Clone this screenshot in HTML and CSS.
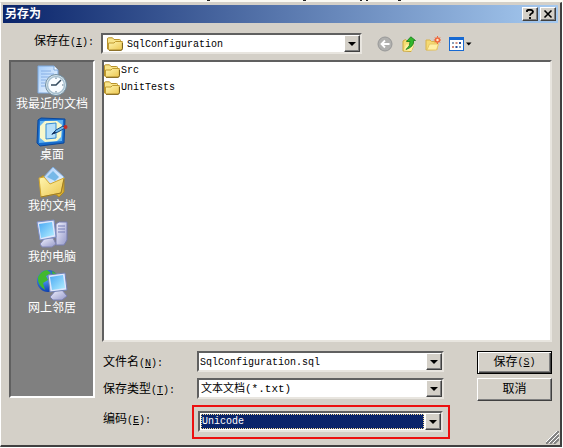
FILE: index.html
```html
<!DOCTYPE html>
<html lang="zh-CN">
<head>
<meta charset="utf-8">
<title>另存为</title>
<link rel="stylesheet" href="styles.css">
</head>
<body>
<svg class="defs" aria-hidden="true">
  <defs>
    <linearGradient id="fold" x1="0" y1="0" x2="1" y2="1"><stop offset="0" stop-color="#fff6b0"/><stop offset="1" stop-color="#ecc650"/></linearGradient>
    <linearGradient id="scr" x1="0" y1="0" x2="1" y2="1"><stop offset="0" stop-color="#4aa8f4"/><stop offset="1" stop-color="#b4f0ff"/></linearGradient>
    <linearGradient id="paper" x1="0" y1="0" x2="1" y2="1"><stop offset="0" stop-color="#a4ccfa"/><stop offset="1" stop-color="#f4f9ff"/></linearGradient>
    <linearGradient id="metal" x1="0" y1="0" x2="1" y2="1"><stop offset="0" stop-color="#f2f3ff"/><stop offset="1" stop-color="#9498c8"/></linearGradient>
    <radialGradient id="earth" cx=".35" cy=".35" r=".7"><stop offset="0" stop-color="#5aa8ff"/><stop offset="1" stop-color="#0838a8"/></radialGradient>
    <symbol id="folder" viewBox="0 0 16 14">
      <path d="M.5 12V2Q.5 .8 1.500 .8H5.500L7 2.500H12.500Q13.500 2.500 13.500 3.500V12.500H1Z" fill="#f8e48a" stroke="#b8922a"/>
      <path d="M1.500 12.500V6H7L8.500 4.500H15.300V11.500Q15 13.200 13.500 13.200H2Z" fill="url(#fold)" stroke="#c09a30"/>
      <path d="M2 13.300H14Q15.500 13 15.500 11.500V6" fill="none" stroke="#7d621c"/>
    </symbol>
  </defs>
</svg>
<div class="page-strip"><svg width="200" height="2" viewBox="0 0 200 2"><path d="M1 .5H4M97 .5H100M154 .5H156M160 .5H162M192 .5H195" stroke="#222"/></svg></div>
<main class="dialog">
  <header class="titlebar">
    <h1>另存为</h1>
    <button class="cap" type="button" aria-label="帮助"><svg width="10" height="10" viewBox="0 0 10 10"><path d="M2 3V1.500Q2.500 .8 5 .8T8 2.500Q8 3.800 6.500 4.500Q5 5.200 5 6.800M5 8V10" fill="none" stroke="#000" stroke-width="1.800"/></svg></button>
    <button class="cap" type="button" aria-label="关闭"><svg width="10" height="10" viewBox="0 0 10 10"><path d="M1.500 1.500L8.500 8.500M8.500 1.500L1.500 8.500" stroke="#000" stroke-width="1.600"/></svg></button>
  </header>
  <div class="toolbar">
    <label for="look">保存在<span class="key">(<u>I</u>):</span></label>
    <div class="combo look">
      <svg class="folder" width="16" height="14"><use href="#folder"/></svg>
      <select id="look"><option>SqlConfiguration</option></select>
      <span class="drop"></span>
    </div>
    <div class="tools">
      <button type="button" aria-label="后退"><svg width="16" height="16" viewBox="0 0 16 16"><circle cx="8" cy="8" r="7" fill="#b0b0ae" stroke="#989898"/><path d="M12.500 8H4.500M8 4.500L4.500 8L8 11.500" fill="none" stroke="#fff" stroke-width="1.800"/></svg></button>
      <button type="button" aria-label="向上一级"><svg width="16" height="16" viewBox="0 0 16 16"><path d="M2 15V5L4.500 3.500L6 5H12V11L10 15.500Z" fill="#f5dc72" stroke="#cda83c"/><path d="M3 14.500L5 8.500H13L10.500 15Z" fill="#fff0a0"/><path d="M5 13.500Q9.500 10 9 5.500H5.500L9.800 .8L14.500 4.500H12.500Q13.500 10.500 5 13.500Z" fill="#32b72c" stroke="#137b18" stroke-width=".8"/></svg></button>
      <button type="button" aria-label="新建文件夹"><svg width="16" height="16" viewBox="0 0 16 16"><path d="M1 14V4H5L6.500 5.500H12V13.500Z" fill="#f5da72" stroke="#d8b24c"/><path d="M2 14L4.500 8H13.500L11.500 14Z" fill="#fff0a6" stroke="#e8c866"/><circle cx="12.500" cy="4" r="2" fill="#ffe8c8" stroke="#f0663a" stroke-width="1.500"/><path d="M12.500 0V1.500M8.800 4H10M15 4H16M10 1.500L11 2.500M15 1.500L14 2.500M10 6.500L11 5.500M15 6.500L14 5.500M12.500 6.500V8" stroke="#f0663a"/></svg></button>
      <button type="button" aria-label="查看菜单"><svg width="23" height="14" viewBox="0 0 23 14"><rect x=".5" y=".5" width="14" height="13" fill="#fff" stroke="#1769d2"/><path d="M0 0H15V3H0Z" fill="#1769d2"/><path d="M3 5H5V7H3ZM10 9H12V11H10Z" fill="#8aa0b8"/><path d="M6.500 5H8.500V7H6.500ZM3 9H5V11H3Z" fill="#d08c7c"/><path d="M10 5H12V7H10ZM6.500 9H8.500V11H6.500Z" fill="#264f9c"/><path d="M17 5.500H22.500L19.700 8.500Z" fill="#000"/></svg></button>
    </div>
  </div>
  <div class="body">
    <nav class="places">
      <a href="#recent"><svg width="32" height="32" viewBox="0 0 32 32"><path d="M2 1H18L22 5V28H2Z" fill="url(#paper)" stroke="#7ca8dc"/><path d="M18 1V5H22" fill="#fff" stroke="#7ca8dc"/><path d="M5 6H15M5 9H18M5 12H14M5 15H10M5 18H9M5 21H10" stroke="#86aee4"/><circle cx="20" cy="20" r="10.500" fill="#dce8ee" stroke="#6e8ca0"/><circle cx="20" cy="20" r="8.500" fill="#f8fcff" stroke="#a6c0d0" stroke-width="1.500"/><path d="M15 20H20L25 15" fill="none" stroke="#30485c" stroke-width="1.500"/><path d="M20 12.500V14M20 26V27.500M26 20H27.500" stroke="#587488"/></svg>我最近的文档</a>
      <a href="#desktop"><svg width="32" height="32" viewBox="0 0 32 32"><path d="M2 4L5 2L29 3L28 27L4 30L1 27Z" fill="#176ccc" stroke="#0b479a"/><path d="M4 5L27 4L26 25L3 27Z" fill="#63b5f2"/><path d="M9 5H21L26 9L25 21L21 25L9 26L4 22V10Z" fill="#f6f8cc"/><path d="M10 8L20 7V22L10 23Z" fill="#b6e0fa" stroke="#338bd4"/><path d="M16 18L20 14L27 10L29 12L22 16Z" fill="#6bb8ec" stroke="#174a88"/><circle cx="29.500" cy="11" r="2" fill="#c42b24"/><path d="M15 19L19 15L20 17Z" fill="#132e58"/></svg>桌面</a>
      <a href="#documents"><svg width="32" height="32" viewBox="0 0 32 32"><path d="M4 15L6 9H13L16 12L28 13V25L23 30Z" fill="#ddb336" stroke="#b08a20"/><path d="M5 13L17 0L28 10L24 24L12 20Z" fill="url(#paper)" stroke="#7ba8d8"/><path d="M11 10L17 4L23 10L19 14Z" fill="#76b8e8"/><path d="M3 11L8 10L14 17L28 11L25 26L5 30Z" fill="url(#fold)" stroke="#d1a62e"/><path d="M5 30L25 26L28 12" fill="none" stroke="#9c7c28"/></svg>我的文档</a>
      <a href="#computer"><svg width="32" height="32" viewBox="0 0 32 32"><path d="M20 6L23 4H31V22L28 27H20Z" fill="url(#metal)" stroke="#777cae"/><path d="M22 8H29M22 11H29M22 14H29" stroke="#777eb6"/><path d="M9 20H17L20 26L16 29H6L4 26Z" fill="url(#metal)" stroke="#8085b5"/><path d="M1 4L18 2L20 19L4 22Z" fill="#dfe7fc" stroke="#7b8dc4"/><path d="M3 6L16 4L18 17L5 20Z" fill="url(#scr)"/></svg>我的电脑</a>
      <a href="#network"><svg width="32" height="32" viewBox="0 0 32 32"><circle cx="12" cy="12" r="11" fill="url(#earth)"/><path d="M2 8Q5 2 11 1L15 4L10 7L12 11L7 14L9 21Q1 16 2 8ZM16 2Q21 4 22 8H17Z" fill="#42b82e"/><path d="M20 21H26L31 27L26 31H17L14 28Z" fill="url(#metal)" stroke="#7a80b2"/><path d="M12 6L29 4L31 21L14 23Z" fill="#dfe7fc" stroke="#7383b5"/><path d="M14 8L27 6L29 19L16 21Z" fill="url(#scr)"/></svg>网上邻居</a>
    </nav>
    <div class="content">
      <ul class="files">
        <li><svg width="16" height="14"><use href="#folder"/></svg>Src</li>
        <li><svg width="16" height="14"><use href="#folder"/></svg>UnitTests</li>
      </ul>
      <form class="form">
        <div class="fields">
          <div class="row">
            <label for="name">文件名<span class="key">(<u>N</u>):</span></label>
            <div class="combo"><input id="name" type="text" value="SqlConfiguration.sql"><span class="drop"></span></div>
          </div>
          <div class="row">
            <label for="type">保存类型<span class="key">(<u>T</u>):</span></label>
            <div class="combo"><select id="type" class="mixed"><option>文本文档(*.txt)</option></select><span class="drop"></span></div>
          </div>
          <div class="row marked">
            <label for="enc">编码<span class="key">(<u>E</u>):</span></label>
            <div class="mark"><div class="combo"><select id="enc" class="chosen"><option>Unicode</option></select><span class="drop"></span></div></div>
          </div>
        </div>
        <div class="actions">
          <button class="default" type="button">保存<span class="key">(<u>S</u>)</span></button>
          <button type="button">取消</button>
        </div>
      </form>
    </div>
  </div>
  <svg class="grip" width="13" height="13" viewBox="0 0 13 13"><path d="M0 13L13 0M4 13L13 4M8 13L13 8" stroke="#808080" stroke-width="2"/><path d="M-1 12L12 -1M3 12L13 2M7 12L13 6" stroke="#fff"/></svg>
</main>
</body>
</html>
```
FILE: styles.css
```css
* { box-sizing: border-box; }

body {
  margin: 0;
  min-height: 100vh;
  display: flex;
  flex-direction: column;
  background: #fff;
  color: #000;
  font: 12px/16px "Liberation Mono", "Noto Sans CJK SC", monospace;
}

.defs { position: absolute; width: 0; height: 0; }

svg { display: block; flex: none; }

/* Bottom of the document behind the dialog */
.page-strip {
  height: 2px;
  padding-left: 206px;
  background: #fbfaf3;
}

.dialog {
  position: relative;
  flex: 1;
  display: flex;
  flex-direction: column;
  margin: 0 1px 1px 0;
  padding: 2px 2px 0;
  background: #d4d0c8;
  border: 1px solid #d4d0c8;
  border-left-color: #fff;
  border-right: 2px solid #404040;
  border-bottom: 2px solid #404040;
}

.titlebar {
  height: 18px;
  display: flex;
  align-items: center;
  padding: 0 2px;
  background: linear-gradient(90deg, #0a246a, #a6caf0);
}
.titlebar h1 {
  flex: 1;
  margin: 0;
  padding-top: 2px;
  color: #fff;
  font-size: 12px;
  line-height: 18px;
  font-weight: 700;
}

button {
  margin: 0;
  padding: 0;
  font: inherit;
  color: inherit;
  display: flex;
  align-items: center;
  justify-content: center;
  background: #d4d0c8;
  border: 1px solid;
  border-color: #fff #404040 #404040 #fff;
  box-shadow: inset -1px -1px #808080;
}

.cap { width: 16px; height: 14px; }
.cap + .cap { margin-left: 2px; }

.key { font-size: 10px; }

.toolbar {
  display: flex;
  align-items: center;
  padding: 10px 0 0 31px;
}
.toolbar label { width: 67px; padding-bottom: 2px; }

.combo {
  flex: 1;
  min-width: 0;
  height: 21px;
  display: flex;
  align-items: center;
  background: #fff;
  border: 2px solid;
  border-color: #606060 #e8e5df #e8e5df #606060;
  font-size: 10px;
}
.look { flex: 0 1 261px; }
.look .folder { margin: 0 3px 0 4px; }

.combo input,
.combo select {
  flex: 1;
  min-width: 0;
  width: 0;
  height: 17px;
  margin: 0;
  padding: 2px 1px 0;
  border: 0;
  border-radius: 0;
  outline: 0;
  appearance: none;
  background: #fff;
  color: #000;
  font: inherit;
  line-height: 15px;
}
.combo .mixed { padding-left: 2px; font-size: 11px; }
.combo .chosen {
  height: 15px;
  margin: 0 1px;
  padding-top: 1px;
  padding-left: 0;
  line-height: 12px;
  background: #0a246a;
  color: #fff;
  border: 1px dotted #f5db95;
}

.drop {
  flex: none;
  width: 16px;
  height: 17px;
  display: flex;
  align-items: center;
  justify-content: center;
  background: #d4d0c8;
  border: 1px solid;
  border-color: #fff #404040 #404040 #fff;
  box-shadow: inset -1px -1px #808080;
  pointer-events: none;
}
.drop::before {
  content: "";
  border: 4px solid transparent;
  border-top-color: #000;
  border-bottom: 0;
}

.tools { display: flex; align-items: center; gap: 8px; margin-left: 15px; }
.tools button { background: none; border: 0; box-shadow: none; }

.body { flex: 1; display: flex; gap: 7px; padding: 6px 6px 0 6px; }

.places {
  flex: none;
  width: 86px;
  height: 338px;
  padding-top: 3px;
  background: #808080;
  border: 2px solid;
  border-color: #606060 #fff #fff #606060;
}
.places a {
  display: flex;
  flex-direction: column;
  align-items: center;
  height: 51px;
  color: #fff;
  text-decoration: none;
  line-height: 17px;
}

.content { flex: 1; min-width: 0; display: flex; flex-direction: column; }

.files {
  height: 282px;
  margin: 0;
  padding: 0;
  list-style: none;
  background: #fff;
  border: 2px solid;
  border-color: #606060 #e8e5df #e8e5df #606060;
  font-size: 10px;
}
.files li { display: flex; align-items: center; gap: 1px; height: 17px; }

.form { display: flex; gap: 27px; margin: 9px 0 0; }
.fields { flex: 1; display: flex; flex-direction: column; gap: 6px; }
.row { display: flex; align-items: center; padding: 0 6px 0 1px; }
.row label { flex: none; width: 94px; padding-top: 4px; }
.marked { padding-right: 0; }
.marked label { width: 89px; padding: 0 0 4px; }
.mark { flex: 1; padding: 4px 5px 5px 4px; border: 2px solid #ec1010; }

.actions { flex: none; width: 75px; display: flex; flex-direction: column; gap: 4px; }
.actions button { height: 23px; }
.actions .default {
  border-color: #000;
  box-shadow: inset 1px 1px #fff, inset -1px -1px #404040, inset -2px -2px #808080;
}

.grip { position: absolute; right: 1px; bottom: 1px; }
```
